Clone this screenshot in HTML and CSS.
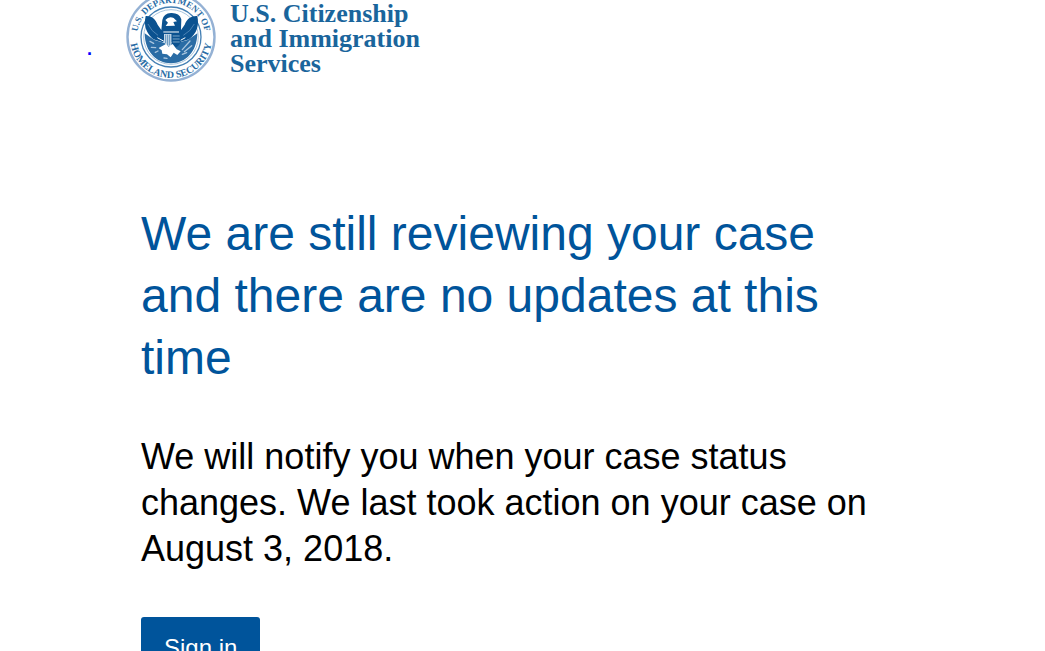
FILE: index.html
```html
<!DOCTYPE html>
<html lang="en">
<head>
<meta charset="utf-8">
<meta name="viewport" content="width=device-width, initial-scale=1">
<title>Case status update</title>
<link rel="stylesheet" href="styles.css">
</head>
<body>
<div class="message">
  <header class="brand">
    <a class="stray" href="#">.</a>
    <svg class="seal" viewBox="0 0 90 90" role="img" aria-label="U.S. Department of Homeland Security seal">
      <defs>
        <path id="arc-top" d="M11 45a34 34 0 0 1 68 0"/>
        <path id="arc-bottom" d="M4 45a41 41 0 0 0 82 0"/>
      </defs>
      <circle cx="45" cy="45" r="43.5" fill="#fff" stroke="#94b1d4" stroke-width="2.4"/>
      <g class="seal-text">
        <text class="seal-text-top"><textPath href="#arc-top" startOffset="50%" text-anchor="middle">U.S. DEPARTMENT OF</textPath></text>
        <text><textPath href="#arc-bottom" startOffset="50%" text-anchor="middle">HOMELAND SECURITY</textPath></text>
      </g>
      <g transform="translate(-6 8) scale(.3333)">
        <circle cx="153" cy="111" r="90" fill="#fff" stroke="#4580b4" stroke-width="4"/>
        <circle cx="153" cy="111" r="82" fill="none" stroke="#7ba6cb" stroke-width="2"/>
        <path fill="#2a6ca5" d="M74 100C75 156 108 189 153 190C198 189 231 156 232 100L203 120L174 128H132L103 120Z"/>
        <path fill="#0b5290" d="M77 48C95 47 106 57 113 74L124 90L127 60Q131 40 153 39Q178 38 184 58L183 90L194 74C202 55 214 47 232 48C238 76 231 101 207 118L180 126H126L100 118C80 100 70 78 77 48Z"/>
        <path fill="none" stroke="#6c9cc6" stroke-width="2" d="M84 72Q94 94 114 106M223 72Q212 94 190 106"/>
        <path fill="#fff" d="M136 60Q147 47 161 54L171 64L160 66L165 77L137 78L144 68Z"/>
        <path fill="none" stroke="#fff" stroke-width="3" d="M130 96H177M112 113L132 124M196 113L176 124"/>
        <path fill="#c7daea" d="M132 102H155V140Q137 139 132 126Z"/>
        <path fill="#0b5290" d="M155 102H182V126Q176 143 155 146Z"/>
        <path fill="none" stroke="#b8d0e4" stroke-width="2" d="M158 108H179M158 117H179M158 126H179"/>
        <path fill="none" stroke="#2a6ca5" stroke-width="2" d="M137 104V130M143 104V136M149 104V136"/>
        <path fill="#fff" d="M116 144L138 132L146 140L158 132L170 148L182 154L172 165L161 158L152 172L141 163L127 161L125 151Z"/>
        <path fill="none" stroke="#a9c5de" stroke-width="4" stroke-linecap="round" d="M90 124L101 130M94 142L107 143M106 157L114 153M210 123L187 149M215 137L193 155M200 158L187 163M132 174L141 175"/>
      </g>
    </svg>
    <p class="brand-name">U.S. Citizenship<br>and Immigration<br>Services</p>
  </header>
  <main class="content">
    <h1 class="title">We are still reviewing your case and there are no updates at this time</h1>
    <p class="body-text">We will notify you when your case status changes. We last took action on your case on August 3, 2018.</p>
    <button class="sign-in" type="button">Sign in</button>
  </main>
</div>
</body>
</html>
```
FILE: styles.css
```css
body {
  margin: 0;
  background: #fff;
  color: #000;
  font-family: Arial, "Liberation Sans", sans-serif;
}
.message {
  height: 100vh;
  overflow: hidden;
}
.brand {
  display: flex;
  margin: -8px 0 0 87px;
}
.stray {
  width: 39px;
  padding-top: 48px;
  color: #00f;
  font-size: 18px;
  font-weight: bold;
  line-height: 18px;
  text-decoration: none;
}
.seal {
  width: 90px;
  height: 90px;
}
.seal-text {
  fill: #2a6ca5;
  font-family: "Liberation Serif", serif;
  font-size: 10px;
  font-weight: bold;
}
.seal-text-top {
  font-size: 9px;
}
.brand-name {
  margin: 9px 0 0 14px;
  color: #1a659c;
  font-family: "Liberation Serif", serif;
  font-size: 26px;
  font-weight: bold;
  line-height: 25px;
}
.content {
  max-width: 750px;
  margin: 121px 0 0 141px;
}
.title {
  margin: 0 0 45px;
  color: #00549b;
  font-size: 48px;
  font-weight: normal;
  line-height: 62px;
}
.body-text {
  margin: 0 0 45px;
  font-size: 36px;
  line-height: 46px;
}
.sign-in {
  padding: 18px 23px;
  border: 0;
  border-radius: 3px;
  background: #00549b;
  color: #fff;
  font-family: inherit;
  font-size: 24px;
  line-height: 26px;
}
```
